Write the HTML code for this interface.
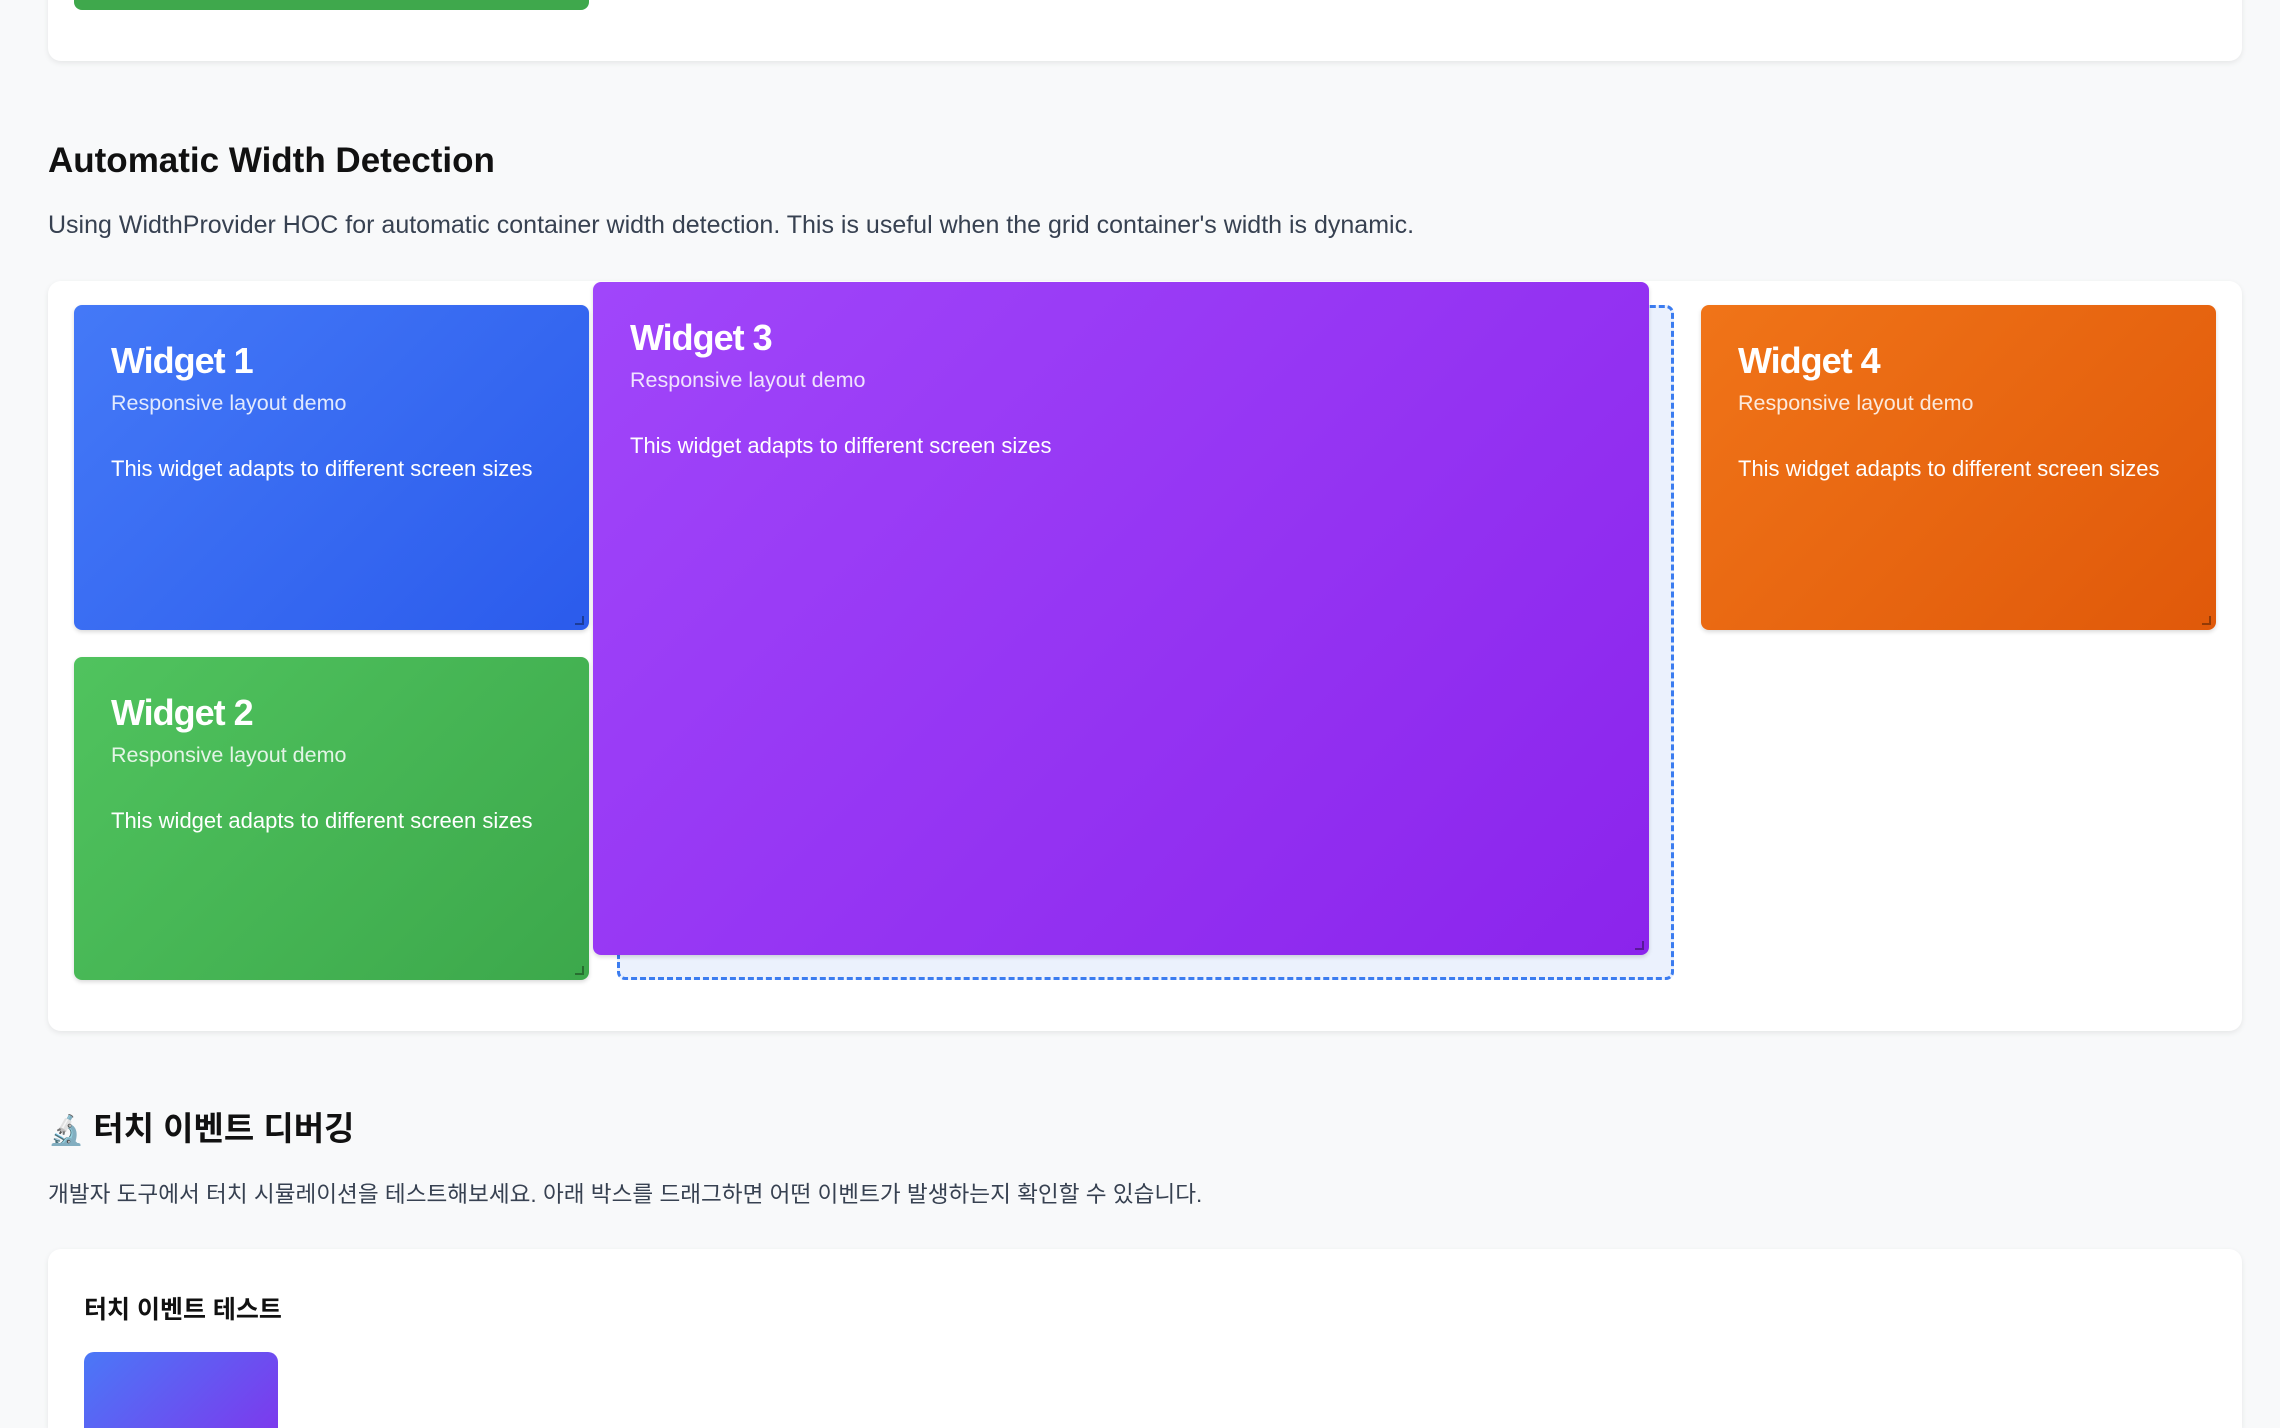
<!DOCTYPE html>
<html style="width:2280px;height:1428px;overflow:hidden"><head><meta charset="utf-8"><style>
*{box-sizing:border-box;margin:0;padding:0}
body{width:2280px;height:1428px;background:#f8f9fa;font-family:"Liberation Sans","Noto Sans CJK KR",sans-serif;position:relative;overflow:hidden}
.card{position:absolute;left:48px;width:2194px;background:#fff;border-radius:13px;box-shadow:0 2px 6px rgba(0,0,0,.08)}
.w{position:absolute;border-radius:8px;color:#fff;padding:0 37px;box-shadow:0 2px 4px rgba(0,0,0,.15)}
.w h3{font-size:36px;font-weight:bold;margin-top:35px;letter-spacing:-1px}
.w .s{font-size:21.5px;opacity:.85;margin-top:9px}
.w .b{font-size:22px;margin-top:40px}
.w::after{content:"";position:absolute;right:5px;bottom:5px;width:7px;height:7px;border-right:2px solid rgba(0,0,0,.35);border-bottom:2px solid rgba(0,0,0,.35)}
h2{position:absolute;left:48px;font-size:35px;font-weight:bold;color:#111}
p.d{position:absolute;left:48px;font-size:25px;color:#374151}
</style></head><body>
<div class="card" style="top:-20px;height:81px"></div>
<div style="position:absolute;left:74px;top:-10px;width:515px;height:20px;background:#3fa84c;border-radius:8px"></div>
<h2 style="top:141px">Automatic Width Detection</h2>
<p class="d" style="top:211px">Using WidthProvider HOC for automatic container width detection. This is useful when the grid container's width is dynamic.</p>
<div class="card" style="top:281px;height:750px"></div>
<div style="position:absolute;left:617px;top:305px;width:1057px;height:675px;background:#ebf1fd;border:3px dashed #3b7cf0;border-radius:8px"></div>
<div class="w" style="left:74px;top:305px;width:515px;height:325px;background:linear-gradient(135deg,#4479f7,#2b5bec)"><h3>Widget 1</h3><div class="s">Responsive layout demo</div><div class="b">This widget adapts to different screen sizes</div></div>
<div class="w" style="left:74px;top:657px;width:515px;height:323px;background:linear-gradient(135deg,#50c35e,#3ca84b)"><h3>Widget 2</h3><div class="s">Responsive layout demo</div><div class="b">This widget adapts to different screen sizes</div></div>
<div class="w" style="left:593px;top:282px;width:1056px;height:673px;background:linear-gradient(135deg,#a046fa,#8b24ec)"><h3>Widget 3</h3><div class="s">Responsive layout demo</div><div class="b">This widget adapts to different screen sizes</div></div>
<div class="w" style="left:1701px;top:305px;width:515px;height:325px;background:linear-gradient(135deg,#f07418,#e0590a)"><h3>Widget 4</h3><div class="s">Responsive layout demo</div><div class="b">This widget adapts to different screen sizes</div></div>
<h2 style="top:1102px;font-size:33px"><span style="font-size:29px">🔬</span> 터치 이벤트 디버깅</h2>
<p class="d" style="top:1176px;font-size:22.6px">개발자 도구에서 터치 시뮬레이션을 테스트해보세요. 아래 박스를 드래그하면 어떤 이벤트가 발생하는지 확인할 수 있습니다.</p>
<div class="card" style="top:1249px;height:179px;border-radius:13px 13px 0 0"></div>
<div style="position:absolute;left:84px;top:1290px;font-size:25px;font-weight:bold;color:#111">터치 이벤트 테스트</div>
<div style="position:absolute;left:84px;top:1352px;width:194px;height:76px;border-radius:10px 10px 0 0;background:linear-gradient(135deg,#4a78f7,#7c3aed)"></div>
</body></html>
